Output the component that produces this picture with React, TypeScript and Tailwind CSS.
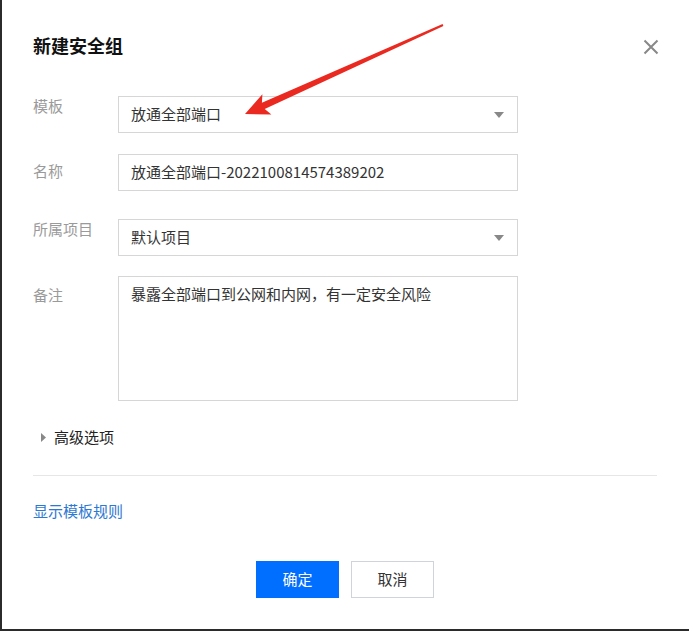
import { ReactNode } from 'react';

function Caret() {
  return (
    <svg width="10" height="6" viewBox="0 0 10 6" className="shrink-0">
      <path d="M0 0 L10 0 L5 6 Z" fill="#888" />
    </svg>
  );
}

function Row({ label, labelPad, children }: { label: string; labelPad: string; children: ReactNode }) {
  return (
    <div className="flex">
      <div className={`w-[85px] shrink-0 text-[15px] leading-[20px] text-[#9a9a9a] ${labelPad}`}>{label}</div>
      {children}
    </div>
  );
}

export default function App() {
  return (
    <div className="relative h-[631px] w-[689px] overflow-hidden border-b-2 border-l-2 border-[#2b2b2b] bg-white font-['Noto_Sans_CJK_SC','Noto_Sans',sans-serif] text-[#333]">
      <div className="flex items-center justify-between pl-[31px] pr-[30px] pt-[32px]">
        <h1 className="text-[18px] leading-[26px] font-bold text-[#111]">新建安全组</h1>
        <svg width="16" height="16" viewBox="0 0 16 16" className="mt-[4px]">
          <path d="M1.5 1.5 L14.5 14.5 M14.5 1.5 L1.5 14.5" stroke="#888" strokeWidth="2" />
        </svg>
      </div>

      <div className="mt-[38px] flex flex-col pl-[31px]">
        <Row label="模板" labelPad="pt-0">
          <div className="flex h-[37px] w-[400px] items-center justify-between border border-[#d6d6d6] pl-[12px] pr-[13px] text-[15px]">
            <span>放通全部端口</span>
            <Caret />
          </div>
        </Row>

        <div className="mt-[21px]">
          <Row label="名称" labelPad="pt-[7px]">
            <div className="flex h-[37px] w-[400px] items-center border border-[#d6d6d6] pl-[12px] text-[15px]">
              放通全部端口-2022100814574389202
            </div>
          </Row>
        </div>

        <div className="mt-[28px]">
          <Row label="所属项目" labelPad="pt-0">
            <div className="flex h-[37px] w-[400px] items-center justify-between border border-[#d6d6d6] pl-[12px] pr-[13px] text-[15px]">
              <span>默认项目</span>
              <Caret />
            </div>
          </Row>
        </div>

        <div className="mt-[20px]">
          <Row label="备注" labelPad="pt-[9px]">
            <div className="h-[125px] w-[400px] border border-[#d6d6d6] pl-[12px] pt-[7px] text-[15px] leading-[20px]">
              暴露全部端口到公网和内网，有一定安全风险
            </div>
          </Row>
        </div>

        <div className="mt-[26px] flex items-center pl-[8px] text-[15px] leading-[20px]">
          <svg width="5" height="9" viewBox="0 0 5 9" className="mr-[8px]">
            <path d="M0 0 L5 4.5 L0 9 Z" fill="#888" />
          </svg>
          <span className="text-[#222]">高级选项</span>
        </div>

        <div className="mt-[28px] h-px w-[624px] bg-[#e6e6e6]" />

        <a className="mt-[25px] w-fit text-[15px] leading-[20px] text-[#2d78d2]">显示模板规则</a>

        <div className="mt-[40px] flex w-[624px] justify-center gap-[12px]">
          <button className="h-[37px] w-[83px] bg-[#006eff] text-[15px] text-white">确定</button>
          <button className="h-[37px] w-[83px] border border-[#cfd3da] bg-white text-[15px] text-[#333]">取消</button>
        </div>
      </div>

      <svg className="pointer-events-none absolute left-0 top-0" width="689" height="631" viewBox="2 0 689 631">
        <polygon
          points="245,114 262.4,94.2 261.9,102.7 442.6,24.1 443.4,25.9 264.7,109.1 271.4,114.4"
          fill="#ea2a20"
        />
      </svg>
    </div>
  );
}
